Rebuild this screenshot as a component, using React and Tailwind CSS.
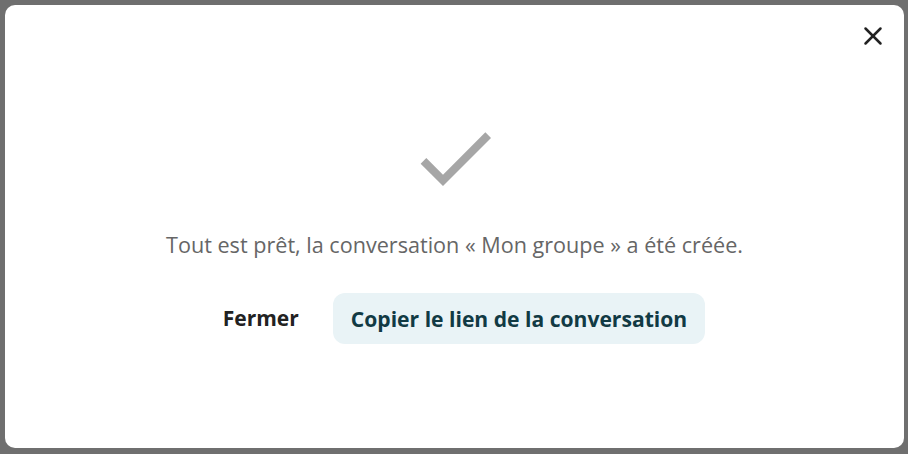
import React from 'react';
import { X } from 'lucide-react';

export default function App() {
  return (
    <div className="w-[908px] h-[454px] bg-[#6f6f6f] pt-[5px] pl-[5px] pr-[4px] pb-[6px]" style={{ fontFamily: '"Open Sans", "Noto Sans", sans-serif' }}>
      <div className="relative w-full h-full bg-white rounded-[10px] flex flex-col items-center">
        <button className="absolute right-[16px] top-[16px] w-[30px] h-[30px] flex items-center justify-center text-[#222]">
          <X className="w-[32px] h-[32px]" strokeWidth={2} />
        </button>
        <svg viewBox="0 0 24 24" className="mt-[105px] w-[96px] h-[96px]" fill="#a6a6a6">
          <path d="M9 16.17L4.83 12l-1.42 1.41L9 19 21 7l-1.41-1.41z" />
        </svg>
        <p className="mt-[25px] text-[21.6px] leading-[28px] text-[#666]">
          Tout est prêt, la conversation « Mon groupe » a été créée.
        </p>
        <div className="mt-[34px] mr-[5px] flex items-center gap-[10px]">
          <button className="h-[51px] px-[24px] rounded-[12px] text-[21px] font-bold text-[#222]">Fermer</button>
          <button className="h-[51px] px-[18px] rounded-[12px] bg-[#e9f3f6] text-[21.1px] font-bold text-[#113a44]">
            Copier le lien de la conversation
          </button>
        </div>
      </div>
    </div>
  );
}
